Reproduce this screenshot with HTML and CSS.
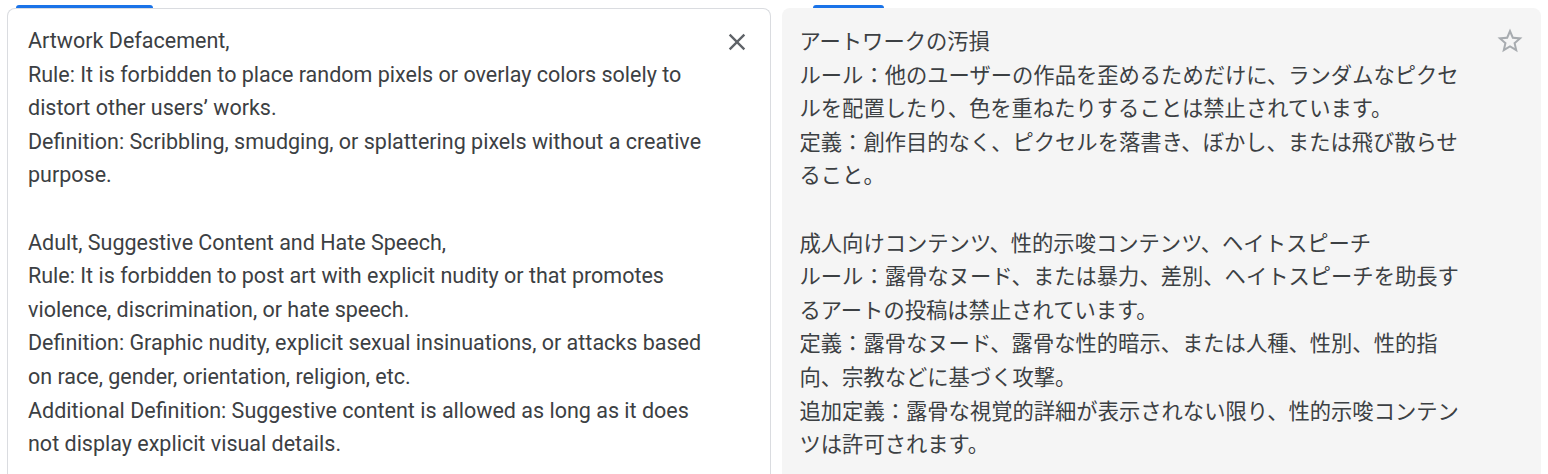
FILE: index.html
```html
<!doctype html>
<html>
  <head>
    <meta charset="utf-8">
    <title>Translate</title>
    <meta name="viewport" content="width=device-width, initial-scale=1">
    <link rel="stylesheet" href="styles.css">
  </head>
  <body>
    <div class="tabs">
      <div class="tab-slot"><span class="indicator indicator-source"></span></div>
      <div class="tab-slot"><span class="indicator indicator-target"></span></div>
    </div>
    <main class="panes">

      <section class="pane pane-source">
        <div class="text">Artwork Defacement,
Rule: It is forbidden to place random pixels or overlay colors solely to distort other users’ works.
Definition: Scribbling, smudging, or splattering pixels without a creative purpose.

Adult, Suggestive Content and Hate Speech,
Rule: It is forbidden to post art with explicit nudity or that promotes violence, discrimination, or hate speech.
Definition: Graphic nudity, explicit sexual insinuations, or attacks based on race, gender, orientation, religion, etc.
Additional Definition: Suggestive content is allowed as long as it does not display explicit visual details.</div>
        <button class="icon-btn clear" aria-label="Clear source text">
          <svg viewBox="0 0 24 24" width="28" height="28"><path d="M19 6.41L17.59 5 12 10.59 6.41 5 5 6.41 10.59 12 5 17.59 6.41 19 12 13.41 17.59 19 19 17.59 13.41 12z"/></svg>
        </button>
      </section>

      <section class="pane pane-target">
        <!-- lines broken where the translation box wraps them -->
        <div class="text jp">アートワークの汚損
ルール：他のユーザーの作品を歪めるためだけに、ランダムなピクセ
ルを配置したり、色を重ねたりすることは禁止されています。
定義：創作目的なく、ピクセルを落書き、ぼかし、または飛び散らせ
ること。

成人向けコンテンツ、性的示唆コンテンツ、ヘイトスピーチ
ルール：露骨なヌード、または暴力、差別、ヘイトスピーチを助長す
るアートの投稿は禁止されています。
定義：露骨なヌード、露骨な性的暗示、または人種、性別、性的指
向、宗教などに基づく攻撃。
追加定義：露骨な視覚的詳細が表示されない限り、性的示唆コンテン
ツは許可されます。</div>
        <button class="icon-btn star" aria-label="Save translation">
          <svg viewBox="0 0 24 24" width="30" height="30"><path d="M22 9.24l-7.19-.62L12 2 9.19 8.63 2 9.24l5.46 4.73L5.82 21 12 17.27 18.18 21l-1.63-7.03L22 9.24zM12 15.4l-3.76 2.27 1-4.28-3.32-2.88 4.38-.38L12 6.1l1.71 4.04 4.38.38-3.32 2.88 1 4.28L12 15.4z"/></svg>
        </button>
      </section>

    </main>
  </body>
</html>
```

FILE: styles.css
```css
body {
  margin: 0;
  padding: 0;
  background: #fff;
  font-family: Roboto, "Noto Sans", arial, sans-serif;
  color: #3c4043;
}
.tabs {
  display: flex;
  gap: 11px;
  height: 8px;
  padding: 0 7px;
}
.tab-slot {
  flex: 1;
  position: relative;
}
.indicator {
  position: absolute;
  bottom: 0;
  height: 3px;
  background-color: #1a73e8;
  border-radius: 3px 3px 0 0;
}
.indicator-source {
  left: 9px;
  width: 137px;
}
.indicator-target {
  left: 33px;
  width: 71px;
}
.panes {
  display: flex;
  gap: 11px;
  padding: 0 7px;
  height: 466px;
}
.pane {
  flex: 1;
  position: relative;
  box-sizing: border-box;
  border-radius: 8px 8px 0 0;
  padding: 15px 20px 0 20px;
}
.pane-source {
  border: 1px solid #dadce0;
  border-bottom: 0;
}
.pane-target {
  background-color: #f5f5f5;
  padding-left: 18px;
}
.text {
  white-space: pre-line;
  font-size: 21.5px;
  line-height: 33.6px;
  width: 692px;
}
.jp {
  font-family: "Noto Sans CJK JP", sans-serif;
  font-size: 21.3px;
  white-space: pre;
}
.icon-btn {
  position: absolute;
  border: 0;
  background: none;
  padding: 0;
  cursor: pointer;
  line-height: 0;
}
.clear {
  top: 19px;
  right: 19px;
}
.clear svg {
  fill: #5f6368;
}
.star {
  top: 18px;
  right: 16px;
}
.star svg {
  fill: #a8acb0;
}
```
